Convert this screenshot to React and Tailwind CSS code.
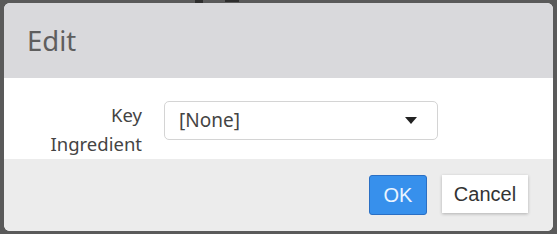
export default function App() {
  return (
    <div className="w-[557px] h-[234px] bg-[#5a5a5a] relative overflow-hidden" style={{ fontFamily: '"Noto Sans", sans-serif' }}>
      <div className="absolute left-[195px] top-0 w-[8px] h-[3px] bg-[#2e2e2e]" />
      <div className="absolute left-[225px] top-0 w-[14px] h-[2px] bg-[#2e2e2e]" />
      <div className="pt-[3px] pl-[4px]">
        <div className="w-[549px] h-[228px] rounded-[6px] overflow-hidden flex flex-col bg-white">
          <div className="h-[75px] bg-[#d9d9dc] flex items-center pl-[23px]">
            <span className="text-[27.5px] text-[#5e5e5e] leading-none">Edit</span>
          </div>
          <div className="h-[81px] bg-white flex pt-[23px]">
            <div className="w-[138px] text-right text-[18.5px] leading-[29px] text-[#444] -mt-[1px]">
              Key
              <br />
              Ingredient
            </div>
            <div className="ml-[22px] w-[274px] h-[39px] border border-[#d4d4d4] rounded-[5px] flex items-center justify-between pl-[14px] pr-[20px]">
              <span className="text-[19px] text-[#444]">[None]</span>
              <svg width="12" height="7" viewBox="0 0 12 7"><path d="M0 0 L12 0 L6 7 Z" fill="#222" /></svg>
            </div>
          </div>
          <div className="flex-1 bg-[#ececec] flex justify-end items-start pt-[16px] pr-[25px] gap-[15px]" style={{ fontFamily: '"Liberation Sans", Arial, sans-serif' }}>
            <button className="w-[58px] h-[40px] bg-[#3790ec] border border-[#2a6fc4] rounded-[3px] text-[20px] text-[#eaf4ff]">OK</button>
            <button className="w-[86px] h-[38px] bg-white text-[20px] text-[#333] shadow-[0_1px_3px_rgba(0,0,0,0.25)]">Cancel</button>
          </div>
        </div>
      </div>
    </div>
  );
}
